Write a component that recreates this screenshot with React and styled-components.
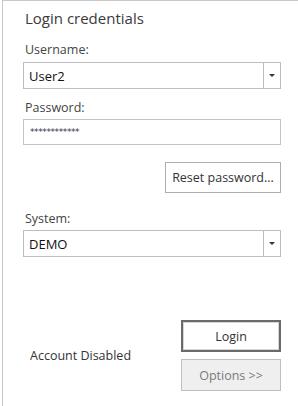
import React from "react";
import styled, { createGlobalStyle } from "styled-components";

const Global = createGlobalStyle`
  html, body { margin: 0; padding: 0; background: #fff; }
  body { font-family: "Open Sans", "Noto Sans", sans-serif; }
`;

const Panel = styled.div`
  margin-left: 2px;
  width: 296px;
  height: 406px;
  box-sizing: border-box;
  border-top: 1px solid #c8c8c8;
  border-left: 1px solid #c8c8c8;
  padding: 0 16px 0 20px;
  display: flex;
  flex-direction: column;
  color: #333;
`;

const Title = styled.div`
  font-size: 15px;
  line-height: 20px;
  margin-top: 7px;
  margin-left: 2px;
  color: #3a3a3a;
`;

const Label = styled.div`
  font-size: 12.5px;
  line-height: 16px;
  margin-top: ${(p) => p.$mt}px;
  margin-left: 2px;
  color: #444;
`;

const Combo = styled.div`
  margin-top: ${(p) => p.$mt}px;
  width: 258px;
  height: 27px;
  box-sizing: border-box;
  border: 1px solid #bdbdbd;
  display: flex;
  align-items: stretch;
`;

const ComboText = styled.div`
  flex: 1;
  display: flex;
  align-items: center;
  padding-left: 5px;
  font-size: 13px;
  color: #111;
`;

const ComboButton = styled.div`
  width: 16px;
  border-left: 1px solid #bdbdbd;
  display: flex;
  align-items: center;
  justify-content: center;
`;

const Arrow = styled.div`
  width: 0;
  height: 0;
  border-left: 3px solid transparent;
  border-right: 3px solid transparent;
  border-top: 3px solid #333;
`;

const TextInput = styled.div`
  margin-top: ${(p) => p.$mt}px;
  width: 258px;
  height: 26px;
  box-sizing: border-box;
  border: 1px solid #c4c4c4;
  display: flex;
  align-items: center;
  padding-left: 6px;
  font-family: "DejaVu Sans", sans-serif;
  font-size: 9px;
  letter-spacing: -0.4px;
  color: #334;
`;

const RightRow = styled.div`
  display: flex;
  justify-content: flex-end;
  width: 258px;
  margin-top: ${(p) => p.$mt}px;
`;

const Button = styled.button`
  box-sizing: border-box;
  width: ${(p) => p.$w}px;
  height: ${(p) => p.$h}px;
  font-family: "Open Sans", "Noto Sans", sans-serif;
  font-size: 12.5px;
  padding: 0;
  background: #fff;
  color: #333;
  border: 1px solid #adadad;
  cursor: default;
`;

const DefaultButton = styled(Button)`
  border: 2px solid #6a6a6a;
  box-shadow: inset 0 0 0 1px #d6d6d6;
`;

const DisabledButton = styled(Button)`
  background: #efefef;
  border: 1px solid #bfbfbf;
  color: #7a7a7a;
`;

const Bottom = styled.div`
  margin-top: 63px;
  width: 258px;
  display: flex;
  align-items: center;
  justify-content: space-between;
`;

const Status = styled.div`
  font-size: 12.5px;
  color: #333;
  margin-left: 7px;
`;

const Buttons = styled.div`
  display: flex;
  flex-direction: column;
  gap: 7px;
`;

export default function App() {
  return (
    <>
      <Global />
      <Panel>
        <Title>Login credentials</Title>
        <Label $mt={14}>Username:</Label>
        <Combo $mt={4}>
          <ComboText>User2</ComboText>
          <ComboButton><Arrow /></ComboButton>
        </Combo>
        <Label $mt={11}>Password:</Label>
        <TextInput $mt={3}>************</TextInput>
        <RightRow $mt={17}>
          <Button $w={116} $h={31}>Reset password...</Button>
        </RightRow>
        <Label $mt={18}>System:</Label>
        <Combo $mt={3}>
          <ComboText>DEMO</ComboText>
          <ComboButton><Arrow /></ComboButton>
        </Combo>
        <Bottom>
          <Status>Account Disabled</Status>
          <Buttons>
            <DefaultButton $w={100} $h={32}>Login</DefaultButton>
            <DisabledButton $w={100} $h={32}>Options &gt;&gt;</DisabledButton>
          </Buttons>
        </Bottom>
      </Panel>
    </>
  );
}
